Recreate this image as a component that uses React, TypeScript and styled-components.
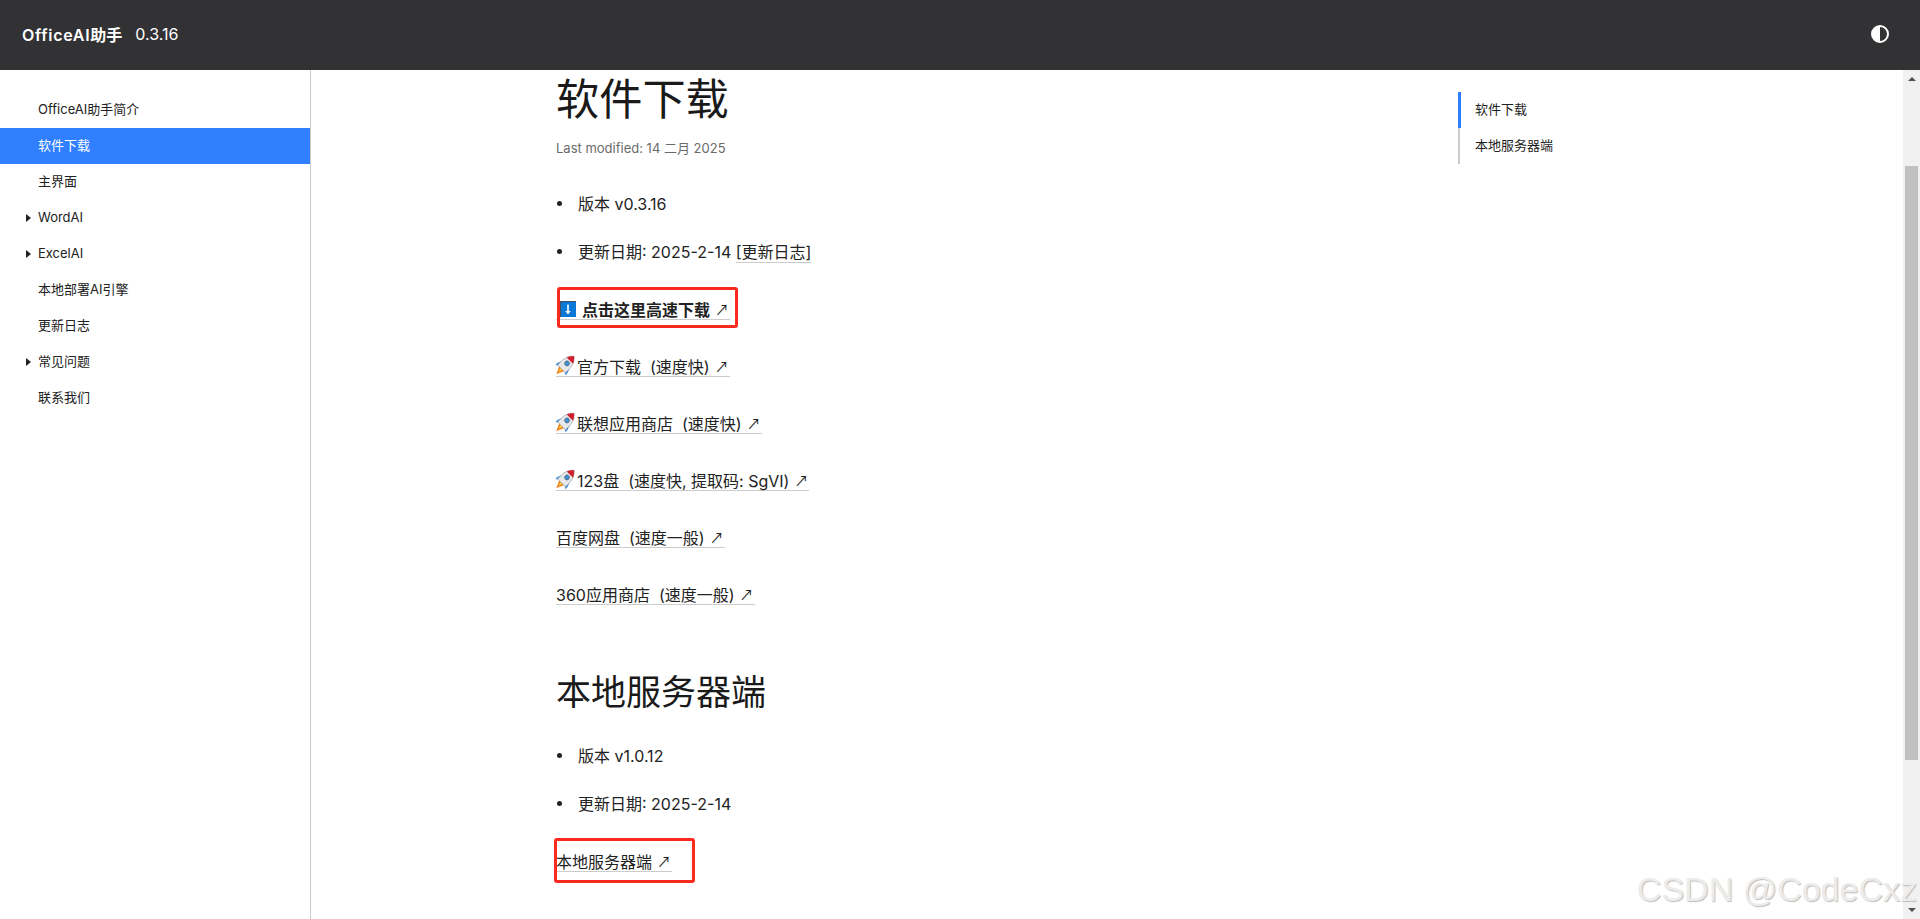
import * as React from 'react';
import styled, { createGlobalStyle } from 'styled-components';

const Global = createGlobalStyle`
  html, body {
    margin: 0;
    height: 100%;
    overflow: hidden;
    background: #fff;
  }
  body {
    font-family: Inter, "Noto Sans CJK SC", sans-serif;
    color: #222;
  }
`;

const sideItems = [
  { label: 'OfficeAI助手简介' },
  { label: '软件下载', active: true },
  { label: '主界面' },
  { label: 'WordAI', arrow: true },
  { label: 'ExcelAI', arrow: true },
  { label: '本地部署AI引擎' },
  { label: '更新日志' },
  { label: '常见问题', arrow: true },
  { label: '联系我们' },
];

const RocketIcon = () => (
  <RocketSvg viewBox="1.5 1 18 18">
    <g transform="rotate(45 10 10)">
      <path d="M6.8 14.5 H13.2 L10 21.5 Z" fill="#f07a1a" />
      <path d="M8.6 15 H11.4 L10 19 Z" fill="#ffd23c" />
      <path d="M5.5 9 L3.6 13.5 V16.5 L6.5 14.5 Z" fill="#3f8ed8" />
      <path d="M14.5 9 L16.4 13.5 V16.5 L13.5 14.5 Z" fill="#3f8ed8" />
      <path d="M10 -1 C13.6 2 15 6 15 10 V15 H5 V10 C5 6 6.4 2 10 -1 Z" fill="#e6e8ea" stroke="#8a9199" strokeWidth="0.5" />
      <path d="M10 -1 C12 0.8 13.4 2.6 14 4.4 H6 C6.6 2.6 8 0.8 10 -1 Z" fill="#d0202e" />
      <circle cx="10" cy="8" r="2.2" fill="#3f8ed8" stroke="#56606a" strokeWidth="0.6" />
    </g>
  </RocketSvg>
);

const DownloadIcon = () => (
  <BlueSquare>
    <svg width="14" height="15" viewBox="0 0 14 15">
      <rect x="6.2" y="2.5" width="1.6" height="7" fill="#fff" />
      <path d="M4.2 9 H9.8 L7 12.4 Z" fill="#fff" />
    </svg>
  </BlueSquare>
);

export default function App() {
  return (
    <Page>
      <Global />
      <Header>
        <Brand>
          <BrandLatin>OfficeAI</BrandLatin>助手
        </Brand>
        <Version>0.3.16</Version>
        <ThemeIcon viewBox="0 0 18 18">
          <circle cx="9" cy="9" r="8" fill="#323234" stroke="#fff" strokeWidth="2" />
          <path d="M9 1 A8 8 0 0 0 9 17 Z" fill="#fff" />
        </ThemeIcon>
      </Header>
      <Body>
        <Sidebar>
          {sideItems.map((item) => (
            <SideItem key={item.label} $active={item.active}>
              {item.arrow && <Caret />}
              {item.label}
            </SideItem>
          ))}
        </Sidebar>
        <Content>
          <Title>软件下载</Title>
          <Modified>Last modified: 14 二月 2025</Modified>
          <List>
            <Bullet>版本 v0.3.16</Bullet>
            <Bullet>
              更新日期: 2025-2-14 <InlineLink>[更新日志]</InlineLink>
            </Bullet>
          </List>
          <LinkRow>
            <Marked>
              <Link $bold>
                <DownloadIcon />
                点击这里高速下载<Arrow>↗</Arrow>
              </Link>
              <RedBox $left={1} $right={-8} $top={-13} $bottom={-8} />
            </Marked>
          </LinkRow>
          <LinkRow>
            <Link>
              <RocketIcon />
              官方下载  (速度快)<Arrow>↗</Arrow>
            </Link>
          </LinkRow>
          <LinkRow>
            <Link>
              <RocketIcon />
              联想应用商店  (速度快)<Arrow>↗</Arrow>
            </Link>
          </LinkRow>
          <LinkRow>
            <Link>
              <RocketIcon />
              123盘  (速度快, 提取码: SgVI)<Arrow>↗</Arrow>
            </Link>
          </LinkRow>
          <LinkRow>
            <Link>
              百度网盘  (速度一般)<Arrow>↗</Arrow>
            </Link>
          </LinkRow>
          <LinkRow>
            <Link>
              360应用商店  (速度一般)<Arrow>↗</Arrow>
            </Link>
          </LinkRow>
          <Subtitle>本地服务器端</Subtitle>
          <List>
            <Bullet>版本 v1.0.12</Bullet>
            <Bullet>更新日期: 2025-2-14</Bullet>
          </List>
          <LinkRow>
            <Marked>
              <Link>
                本地服务器端<Arrow>↗</Arrow>
              </Link>
              <RedBox $left={-2} $right={-23} $top={-14} $bottom={-11} />
            </Marked>
          </LinkRow>
        </Content>
        <Toc>
          <TocItem $active>软件下载</TocItem>
          <TocItem>本地服务器端</TocItem>
        </Toc>
        <Scrollbar>
          <ArrowUp />
          <Thumb />
          <ArrowDown />
        </Scrollbar>
      </Body>
      <Watermark>CSDN @CodeCxz</Watermark>
    </Page>
  );
}

const Page = styled.div`
  position: relative;
  height: 919px;
  display: flex;
  flex-direction: column;
  overflow: hidden;
`;

const Header = styled.header`
  height: 70px;
  flex: none;
  background: #323234;
  color: #fff;
  display: flex;
  align-items: center;
  padding: 0 31px 2px 22px;
  box-sizing: border-box;
`;

const Brand = styled.div`
  font-size: 16px;
  font-weight: 600;
`;

const BrandLatin = styled.span`
  letter-spacing: 0.7px;
`;

const Version = styled.div`
  font-size: 16px;
  margin-left: 13px;
`;

const ThemeIcon = styled.svg`
  width: 18px;
  height: 18px;
  margin-left: auto;
`;

const Body = styled.div`
  flex: 1;
  min-height: 0;
  display: flex;
`;

const Sidebar = styled.nav`
  width: 310px;
  flex: none;
  border-right: 1px solid #ccc;
  padding-top: 22px;
`;

const SideItem = styled.div<{ $active?: boolean }>`
  position: relative;
  height: 36px;
  line-height: 34px;
  padding-left: 38px;
  font-size: 13px;
  color: ${(p) => (p.$active ? '#fff' : '#222')};
  background: ${(p) => (p.$active ? '#307fff' : 'transparent')};
`;

const Caret = styled.span`
  position: absolute;
  left: 26px;
  top: 14px;
  border-left: 5px solid #222;
  border-top: 4px solid transparent;
  border-bottom: 4px solid transparent;
`;

const Content = styled.main`
  flex: 1;
  min-width: 0;
  padding-left: 245px;
  overflow: hidden;
`;

const Title = styled.h1`
  margin: -1px 0 0;
  font-size: 43.2px;
  font-weight: 400;
  line-height: 60px;
  color: #1a1a1a;
`;

const Modified = styled.div`
  margin: 11px 0 36px;
  font-size: 13px;
  line-height: 16px;
  color: #6b6b6b;
`;

const List = styled.ul`
  display: flow-root;
  list-style: none;
  margin: 0 0 12px;
  padding: 0;
`;

const Bullet = styled.li`
  position: relative;
  padding-left: 22px;
  font-size: 16px;
  line-height: 24px;
  margin-bottom: 24px;

  &::before {
    content: '';
    position: absolute;
    left: 1px;
    top: 9px;
    width: 5px;
    height: 5px;
    border-radius: 50%;
    background: #222;
  }
`;

const LinkRow = styled.div`
  display: flex;
  align-items: flex-start;
  height: 57px;
  font-size: 16px;
`;

const Marked = styled.span`
  position: relative;
  display: inline-flex;
`;

const InlineLink = styled.a`
  border-bottom: 1px solid #ccc;
  color: #222;
`;

const Link = styled.a<{ $bold?: boolean }>`
  display: inline-flex;
  align-items: center;
  box-sizing: border-box;
  height: 20px;
  padding-bottom: 2px;
  border-bottom: 1px solid #ccc;
  font-weight: ${(p) => (p.$bold ? 700 : 400)};
  color: #222;
  white-space: pre;
`;

const Arrow = styled.span`
  font-family: "Noto Sans CJK SC", sans-serif;
  font-weight: 400;
  font-size: 14px;
  margin: 0 1px 0 5px;
`;

const RedBox = styled.span<{ $left: number; $right: number; $top: number; $bottom: number }>`
  position: absolute;
  left: ${(p) => p.$left}px;
  right: ${(p) => p.$right}px;
  top: ${(p) => p.$top}px;
  bottom: ${(p) => p.$bottom}px;
  border: 3px solid #fc2a1e;
  border-radius: 3px;
  pointer-events: none;
`;

const RocketSvg = styled.svg`
  width: 20px;
  height: 20px;
  margin: -1px 1px 0 0;
  overflow: visible;
  flex: none;
`;

const BlueSquare = styled.span`
  display: inline-flex;
  box-sizing: border-box;
  width: 16px;
  height: 16px;
  margin: 0 6px 0 4px;
  background: #0a78d7;
  border-top: 1px solid #44505c;
  border-left: 1px solid #44505c;
`;

const Subtitle = styled.h2`
  margin: 25px 0 27px;
  font-size: 35px;
  font-weight: 400;
  line-height: 50px;
  color: #1a1a1a;
`;

const Toc = styled.aside`
  width: 445px;
  flex: none;
  padding-top: 22px;
`;

const TocItem = styled.div<{ $active?: boolean }>`
  width: 200px;
  height: 36px;
  line-height: 34px;
  font-size: 13px;
  box-sizing: border-box;
  padding-left: ${(p) => (p.$active ? 14 : 15)}px;
  border-left: ${(p) => (p.$active ? '3px solid #307fff' : '2px solid #ccc')};
  color: #222;
`;

const Scrollbar = styled.div`
  width: 17px;
  flex: none;
  background: #f1f1f1;
  display: flex;
  flex-direction: column;
  align-items: center;
  padding-top: 7px;
`;

const ArrowUp = styled.span`
  border-left: 4px solid transparent;
  border-right: 4px solid transparent;
  border-bottom: 4px solid #505050;
`;

const Thumb = styled.div`
  width: 13px;
  height: 594px;
  margin-top: 85px;
  background: #c1c1c1;
`;

const ArrowDown = styled.span`
  margin-top: auto;
  margin-bottom: 7px;
  border-left: 4px solid transparent;
  border-right: 4px solid transparent;
  border-top: 4px solid #505050;
`;

const Watermark = styled.div`
  position: absolute;
  right: 3px;
  bottom: 9px;
  font-family: "Liberation Sans", Arial, sans-serif;
  font-size: 34px;
  line-height: 42px;
  color: #ececec;
  text-shadow: 1px 1px 1px #bdbdbd;
  white-space: nowrap;
`;
